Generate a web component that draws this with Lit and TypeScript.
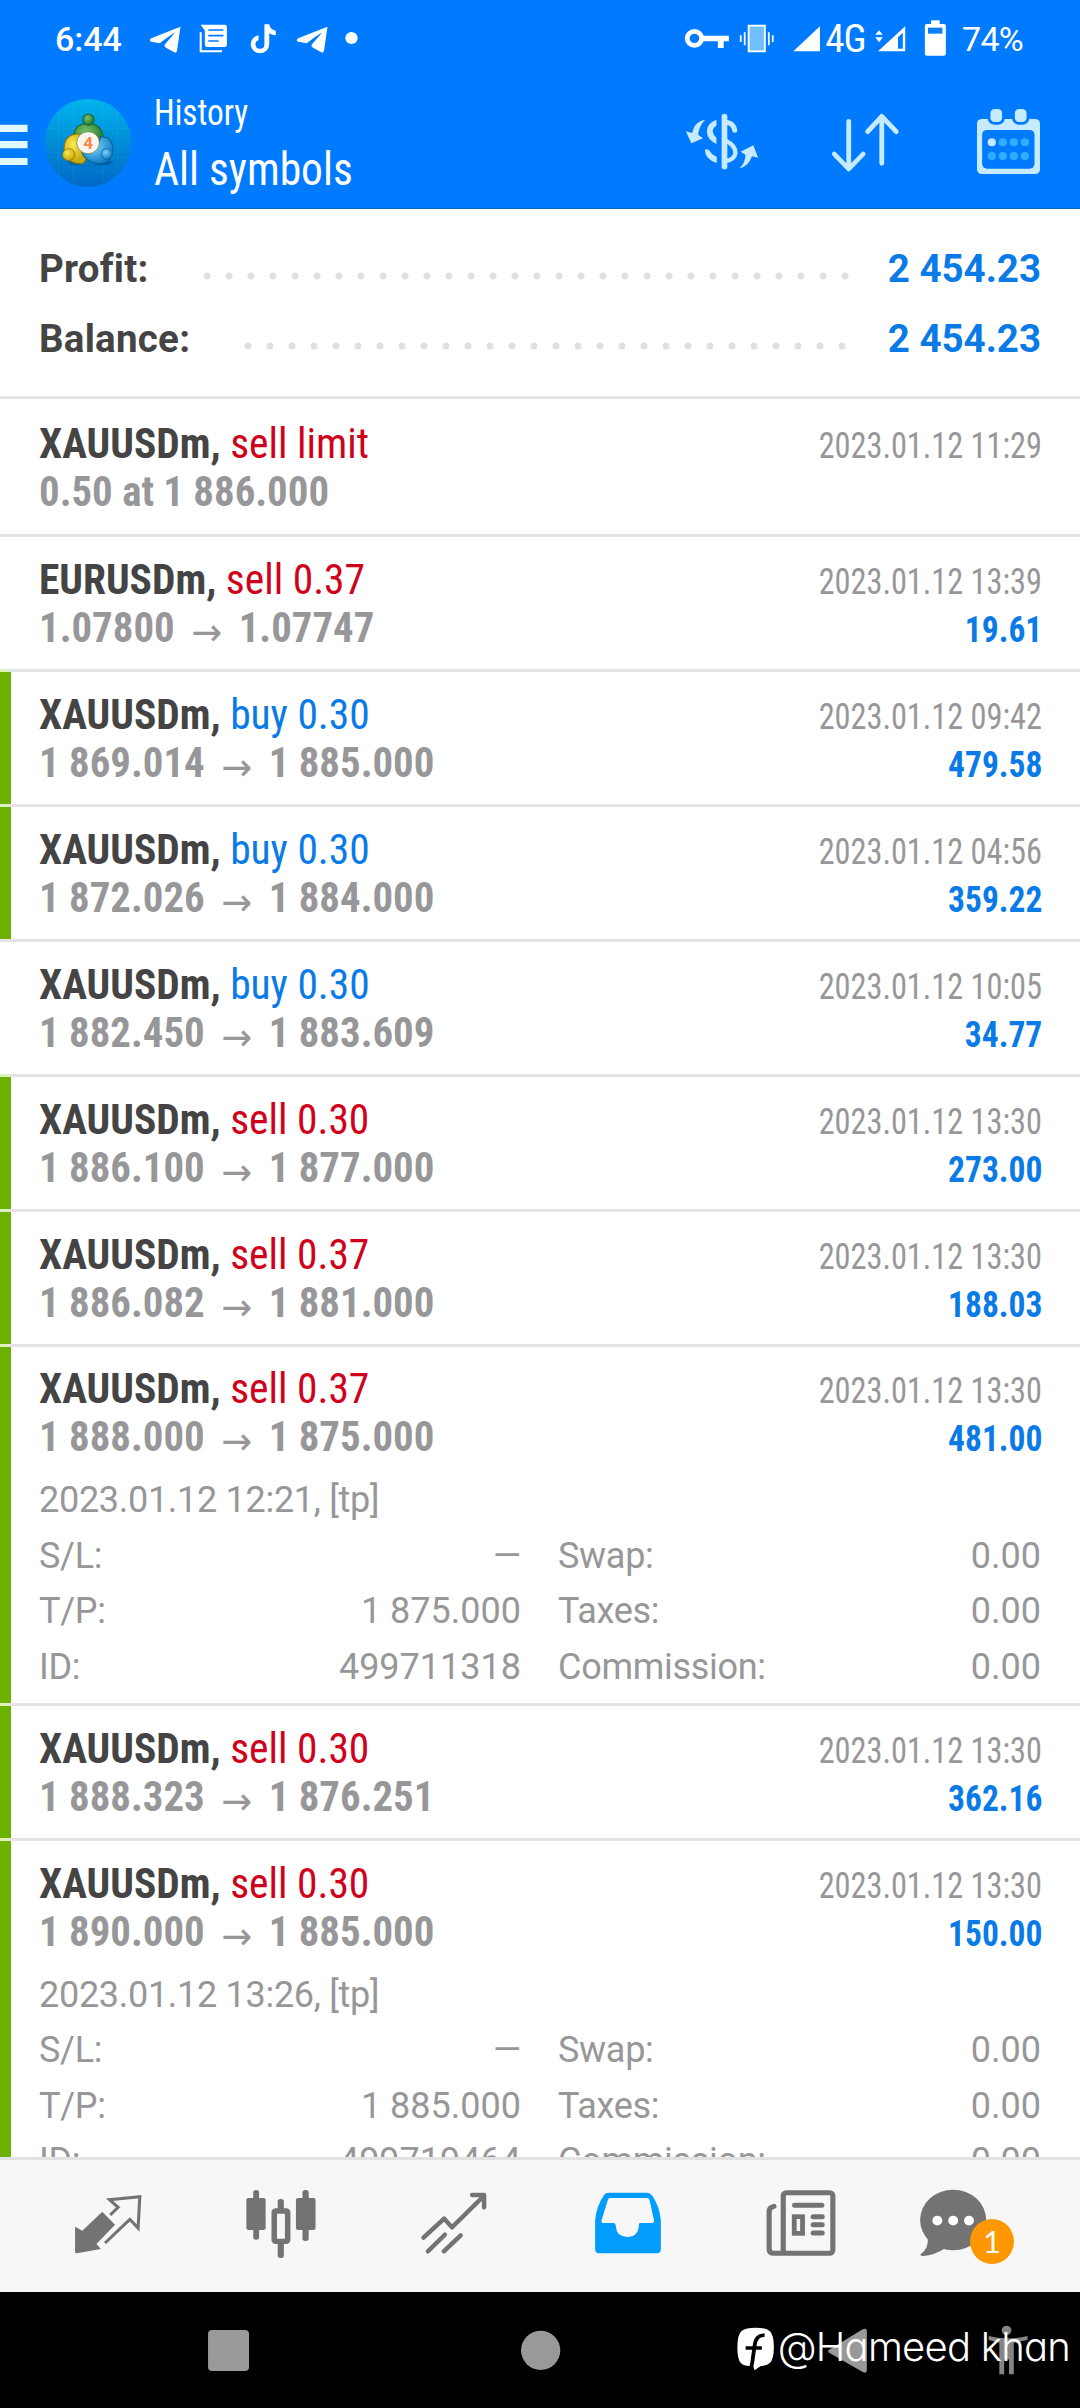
import { LitElement, html, css, svg, nothing } from "lit";
import { customElement, property } from "lit/decorators.js";
import { classMap } from "lit/directives/class-map.js";

// Icon artwork is drawn on a grid of 2.904 x 3 units per pixel.
const UX = 2.9037;
const UY = 3;

const cell = (x: number, y: number, w: number, h: number, body: unknown) => html`<svg
  viewBox="${x} ${y} ${w} ${h}"
  width="${w / UX}"
  height="${h / UY}"
  preserveAspectRatio="none"
  aria-hidden="true"
>${body}</svg>`;

interface Detail {
  opened: string;
  sl: string;
  tp: string;
  id: string;
}

interface Deal {
  symbol: string;
  side: "buy" | "sell";
  label: string;
  price: string;
  close?: string;
  time: string;
  profit?: string;
  target?: boolean;
  detail?: Detail;
}

const DEALS: Deal[] = [
  { symbol: "XAUUSDm", side: "sell", label: "sell limit", price: "0.50 at 1 886.000", time: "2023.01.12 11:29" },
  { symbol: "EURUSDm", side: "sell", label: "sell 0.37", price: "1.07800", close: "1.07747", time: "2023.01.12 13:39", profit: "19.61" },
  { symbol: "XAUUSDm", side: "buy", label: "buy 0.30", price: "1 869.014", close: "1 885.000", time: "2023.01.12 09:42", profit: "479.58", target: true },
  { symbol: "XAUUSDm", side: "buy", label: "buy 0.30", price: "1 872.026", close: "1 884.000", time: "2023.01.12 04:56", profit: "359.22", target: true },
  { symbol: "XAUUSDm", side: "buy", label: "buy 0.30", price: "1 882.450", close: "1 883.609", time: "2023.01.12 10:05", profit: "34.77" },
  { symbol: "XAUUSDm", side: "sell", label: "sell 0.30", price: "1 886.100", close: "1 877.000", time: "2023.01.12 13:30", profit: "273.00", target: true },
  { symbol: "XAUUSDm", side: "sell", label: "sell 0.37", price: "1 886.082", close: "1 881.000", time: "2023.01.12 13:30", profit: "188.03", target: true },
  {
    symbol: "XAUUSDm", side: "sell", label: "sell 0.37", price: "1 888.000", close: "1 875.000", time: "2023.01.12 13:30", profit: "481.00", target: true,
    detail: { opened: "2023.01.12 12:21, [tp]", sl: "—", tp: "1 875.000", id: "499711318" },
  },
  { symbol: "XAUUSDm", side: "sell", label: "sell 0.30", price: "1 888.323", close: "1 876.251", time: "2023.01.12 13:30", profit: "362.16", target: true },
  {
    symbol: "XAUUSDm", side: "sell", label: "sell 0.30", price: "1 890.000", close: "1 885.000", time: "2023.01.12 13:30", profit: "150.00", target: true,
    detail: { opened: "2023.01.12 13:26, [tp]", sl: "—", tp: "1 885.000", id: "499719464" },
  },
];

const telegram = svg`<path fill="#fff" d="M523 80 L438 115 Q430 122 438 125 L463 130 Q490 108 508 97 L478 133 Q474 139 481 143 L505 157 Q511 161 513 152 Z"/>`;

@customElement("status-bar")
export class StatusBar extends LitElement {
  static styles = css`
    :host { display: flex; height: 76px; padding-left: 55px; color: #fff; font: 34px/79px Roboto, sans-serif; white-space: nowrap; }
    svg { display: block; flex: none; }
    .time { width: 89.6px; flex: none; font-weight: 500; }
    .net { width: 42px; flex: none; font: 400 39px/78px "Roboto Condensed", Roboto, sans-serif; font-stretch: 75%; letter-spacing: -1px; }
    .fill { flex: 1; }
    .level { width: 118px; flex: none; letter-spacing: -0.700px; }
  `;
  render() {
    return html`
      <span class="time">6:44</span>
      ${cell(420, 0, 130, 228, telegram)}
      ${cell(550, 0, 150, 228, svg`
        <path d="M584 97 V154 H646" fill="none" stroke="#fff" stroke-width="6"/>
        <path fill="#fff" d="M584 74 H654 Q660 74 660 80 V134 Q660 141 654 141 H602 Q596 141 596 134 V92 Z"/>
        <path d="M606 90 H650 M606 107 H650 M606 123 H636" stroke="#007bff" stroke-width="5"/>`)}
      ${cell(700, 0, 147, 228, svg`<path fill="#fff" d="M768 73 h14 q3 17 19 19 v14 q-11 0 -19 -6 v33 a27 27 0 1 1 -31 -27 v15 a13 13 0 1 0 17 13 Z"/>`)}
      ${cell(420, 0, 130, 228, telegram)}
      ${cell(977, 0, 90, 228, svg`<circle cx="1022" cy="114" r="18" fill="#fff"/>`)}
      <span class="fill"></span>
      ${cell(410, 0, 290, 228, svg`
        <circle cx="449" cy="115" r="21" fill="none" stroke="#fff" stroke-width="14"/>
        <path fill="#fff" d="M472 107 H549 V124 H534 V144 H517 V124 H472Z"/>
        <rect x="606.5" y="77" width="47" height="77" fill="#70bfff" stroke="#fff" stroke-width="5.5"/>
        <path d="M583.500 106 V126 M595 97 V136 M665 97 V136 M676.500 106 V126" stroke="#fff" stroke-width="5"/>`)}
      ${cell(700, 0, 128, 228, svg`<path fill="#fff" d="M736 154 L813 79 V154Z"/>`)}
      <span class="net">4G</span>
      ${cell(950, 0, 275, 228, svg`
        <path fill="#fff" d="M974 104 L985 91 L996 104Z M974 112 H996 L985 127Z M982 154 L1061 79 V154Z"/>
        <path fill="#007bff" d="M1040 112 L1054 98 V146 H1040Z"/>
        <rect x="1118" y="72" width="61" height="95" rx="6" fill="#fff"/>
        <rect x="1136" y="61" width="25" height="16" fill="#fff"/>
        <rect x="1127" y="83" width="42" height="18" fill="#0a80f0"/>`)}
      <span class="level">74%</span>
    `;
  }
}

@customElement("app-bar")
export class AppBar extends LitElement {
  static styles = css`
    :host { display: flex; height: 132px; color: #fff; font-family: "Roboto Condensed", Roboto, sans-serif; font-stretch: 75%; white-space: nowrap; }
    svg { display: block; flex: none; }
    .titles { flex: 1; padding: 15.700px 0 0 20px; }
    .section, .scope { transform: scaleX(0.925); transform-origin: 0 50%; }
    .section { font-size: 36px; line-height: 42px; }
    .scope { font-size: 47px; line-height: 56px; margin-top: 7px; }
    .four { font: 700 50px Roboto, sans-serif; }
  `;
  render() {
    const ice = "#c6eaff";
    return html`
      ${cell(0, 228, 128, 396, svg`<path fill="#e2f8ff" d="M0 374 H80 V396 H0Z M0 423 H80 V445 H0Z M0 474 H80 V495 H0Z"/>`)}
      ${cell(128, 228, 260, 396, svg`
        <defs>
          <linearGradient id="sky" x1="0" y1="0" x2="0" y2="1"><stop offset="0" stop-color="#00b4ee"/><stop offset=".45" stop-color="#0090d8"/><stop offset="1" stop-color="#0068c8"/></linearGradient>
          <radialGradient id="g" cx=".4" cy=".35" r=".6"><stop offset="0" stop-color="#7cc46a"/><stop offset="1" stop-color="#237d2e"/></radialGradient>
          <radialGradient id="y" cx=".4" cy=".35" r=".6"><stop offset="0" stop-color="#fbe84e"/><stop offset="1" stop-color="#c9a90c"/></radialGradient>
          <radialGradient id="b" cx=".4" cy=".35" r=".6"><stop offset="0" stop-color="#7fd2fa"/><stop offset="1" stop-color="#1684c8"/></radialGradient>
        </defs>
        <ellipse cx="256" cy="429" rx="126" ry="132" fill="url(#sky)"/>
        <path d="M170 335 V523 M213 310 V550 M299 310 V550 M342 335 V523 M140 385 H372 M140 473 H372 M165 517 H347 M165 341 H347" stroke="#fff" stroke-opacity=".08" stroke-width="2"/>
        <path d="M190 480 Q256 512 330 480 L318 494 Q256 500 206 494Z" fill="#034a7e" opacity=".55"/>
        <path d="M214 420 Q210 372 257 370 Q303 374 302 432 Q290 452 276 440 L257 398 L230 412Z" fill="url(#g)" stroke="#1c6430" stroke-width="3"/>
        <path d="M240 403 Q186 396 186 448 Q194 494 240 491 L252 478 L236 440Z" fill="url(#y)" stroke="#86740c" stroke-width="3"/>
        <path d="M292 410 Q326 408 328 448 Q322 494 284 491 Q250 488 238 458 L270 448 Q290 440 292 410Z" fill="url(#b)" stroke="#0b5b93" stroke-width="3"/>
        <ellipse cx="257" cy="359" rx="16" ry="17" fill="url(#g)" stroke="#1c6430" stroke-width="3"/>
        <circle cx="200" cy="464" r="18" fill="url(#y)" stroke="#86740c" stroke-width="2"/>
        <circle cx="310" cy="462" r="16" fill="url(#b)" stroke="#0b5b93" stroke-width="2"/>
        <circle cx="256" cy="428" r="33" fill="#fdf6f0" stroke="#55773c" stroke-width="2"/>
        <text class="four" x="256" y="446" text-anchor="middle" fill="#f58a44">4</text>`)}
      <div class="titles">
        <div class="section">History</div>
        <div class="scope">All symbols</div>
      </div>
      ${cell(410, 228, 330, 396, svg`
        <rect x="528" y="341" width="16.500" height="167" rx="8" fill="${ice}"/>
        <path d="M544 367 Q564 371 566 391" fill="none" stroke="${ice}" stroke-width="15" stroke-linecap="round"/>
        <path d="M540 422 Q570 438 568 460 Q564 480 540 483" fill="none" stroke="${ice}" stroke-width="13"/>
        <path fill="${ice}" d="M513 359 Q485 370 485 395 Q487 420 513 432 V413 Q503 405 502 394 Q503 382 513 377Z M479 450 Q487 444 494 453 Q501 466 514 470 V489 Q482 480 479 450Z"/>
        <path fill="${ice}" d="M480 359 Q456 364 448 382 L442 399 L424 394 L440 430 L474 415 L460 404 Q461 380 480 359Z"/>
        <path fill="${ice}" d="M620 436 L583 455 L597 464 Q598 486 580 505 Q606 500 616 469 L634 473 Z"/>`)}
      ${cell(740, 228, 410, 396, svg`<path d="M896 364 V506 M854 462 L896 507 L938 462 M992 350 V490 M951 395 L992 349 L1034 395" fill="none" stroke="${ice}" stroke-width="14" stroke-linecap="round" stroke-linejoin="round"/>`)}
      ${cell(1150, 228, 418, 396, svg`
        <rect x="1269" y="357" width="183" height="165" rx="14" fill="${ice}"/>
        <rect x="1284" y="390" width="152" height="116" rx="14" fill="#007bff"/>
        <rect x="1304" y="323" width="42" height="47" rx="16" fill="${ice}" stroke="#007bff" stroke-width="8"/>
        <rect x="1375" y="323" width="42" height="47" rx="16" fill="${ice}" stroke="#007bff" stroke-width="8"/>
        <g fill="#30adff">
          <circle cx="1344" cy="427" r="12"/><circle cx="1376" cy="427" r="12"/><circle cx="1408" cy="427" r="12"/>
          <circle cx="1312" cy="468" r="12"/><circle cx="1344" cy="468" r="12"/><circle cx="1376" cy="468" r="12"/><circle cx="1408" cy="468" r="12"/>
        </g>
        <circle cx="1312" cy="427" r="12" fill="${ice}"/>`)}
    `;
  }
}

@customElement("deal-row")
export class DealRow extends LitElement {
  @property({ attribute: false }) deal!: Deal;
  static styles = css`
    :host { display: block; flex: none; white-space: nowrap; }
    :host(.first) .body { padding-top: 20.600px; padding-bottom: 18.400px; }
    .row { display: flex; border-top: 3px solid #e4e4e4; }
    .row.hit { border-image: linear-gradient(90deg, #def3bb 11px, #e4e4e4 11px) 3; }
    .mark { width: 11px; flex: none; }
    .hit .mark { background: #6cb000; }
    .body { flex: 1; padding: 18.600px 38px 17.400px 28px; }
    .open .body { padding-bottom: 8px; }
    .line { display: flex; justify-content: space-between; height: 48px; line-height: 48px; font-family: "Roboto Condensed", Roboto, sans-serif; font-stretch: 75%; font-size: 42px; }
    .title, .price { transform: scaleX(0.987); transform-origin: 0 50%; }
    .symbol { font-weight: 700; color: #444; }
    .sell { color: #d0021b; }
    .buy { color: #0a7be6; }
    .price { font-weight: 700; color: #979799; transform: scaleX(0.972); }
    .arrow { font: 400 38px/0 "DejaVu Sans", sans-serif; margin: 0 17px; position: relative; top: 3px; }
    .time, .profit { font-size: 36px; line-height: 52px; transform-origin: 100% 50%; }
    .time { color: #979799; transform: scaleX(0.897); }
    .profit { color: #0a7be6; font-weight: 700; transform: scaleX(0.93); }
    .detail { margin-top: 11.800px; margin-right: 1px; font: 36px/55.500px Roboto, sans-serif; color: #979799; }
    .text { letter-spacing: -0.290px; }
    .grid { display: grid; grid-template-columns: 482px 483px; column-gap: 37px; }
    .pair { display: flex; justify-content: space-between; }
  `;
  private pair(name: string, value: string) {
    return html`<div class="pair"><span class="text">${name}</span><span>${value}</span></div>`;
  }
  render() {
    const d = this.deal;
    return html`<div class=${classMap({ row: true, hit: !!d.target, open: !!d.detail })}>
      <div class="mark"></div>
      <div class="body">
        <div class="line">
          <span class="title"><span class="symbol">${d.symbol},</span> <span class=${d.side}>${d.label}</span></span>
          <span class="time">${d.time}</span>
        </div>
        <div class="line">
          <span class="price">${d.price}${d.close ? html`<span class="arrow">→</span>${d.close}` : nothing}</span>
          ${d.profit ? html`<span class="profit">${d.profit}</span>` : nothing}
        </div>
        ${d.detail
          ? html`<div class="detail">
              <div class="text">${d.detail.opened}</div>
              <div class="grid">
                ${this.pair("S/L:", d.detail.sl)}${this.pair("Swap:", "0.00")}
                ${this.pair("T/P:", d.detail.tp)}${this.pair("Taxes:", "0.00")}
                ${this.pair("ID:", d.detail.id)}${this.pair("Commission:", "0.00")}
              </div>
            </div>`
          : nothing}
      </div>
    </div>`;
  }
}

@customElement("tab-bar")
export class TabBar extends LitElement {
  static styles = css`
    :host { display: flex; flex: none; height: 132px; padding-left: 21.350px; border-top: 3px solid #e2e2e2; background: #f7f7f7; }
    svg { display: block; flex: none; }
    .chat { position: relative; }
    .badge { position: absolute; left: 84.300px; top: 59px; width: 44px; height: 45px; border-radius: 50%; background: #ff9800; color: #fff; font: 31px/45px Lato, sans-serif; text-align: center; }
  `;
  render() {
    const k = "#737373";
    return html`
      ${cell(62, 60, 502, 396, svg`
        <path fill="${k}" d="M298 215 L335 254 L281 312 L294 327 L224 340 Q219 340 219 335 V260 L240 272Z"/>
        <path fill="none" stroke="${k}" stroke-width="9" d="M321 225 L344 202 L319 179 L407 170 L402 264 L378 238 L306 309"/>`)}
      ${cell(564, 60, 502, 396, svg`
        <g fill="${k}">
          <rect x="716" y="174" width="56" height="96" rx="6"/><rect x="736" y="150" width="17" height="149" rx="8"/>
          <rect x="860" y="174" width="57" height="96" rx="6"/><rect x="879" y="150" width="18" height="153" rx="8"/>
          <rect x="807" y="177" width="18" height="40" rx="8"/><rect x="807" y="303" width="18" height="51" rx="8"/>
        </g>
        <rect x="797" y="213" width="39" height="91" rx="4" fill="#f7f7f7" stroke="${k}" stroke-width="16"/>`)}
      ${cell(1066, 60, 502, 396, svg`<path d="M1230 293 L1290 236 L1313 262 L1405 168 M1371 165 H1406 V202 M1243 334 L1292 284 M1289 334 L1338 286" fill="none" stroke="${k}" stroke-width="13" stroke-linecap="round" stroke-linejoin="round"/>`)}
      ${cell(0, 60, 502, 396, svg`<path fill="#009dff" fill-rule="evenodd" d="M200 158 H311 Q320 158 326 167 Q348 200 351 242 V328 Q351 340 340 340 H171 Q160 340 160 328 V242 Q163 200 186 165 Q190 158 200 158Z M204 174 H311 Q316 174 318 180 L331 240 Q332 248 325 249 H290 Q286 251 287 258 Q284 291 253 291 Q222 290 220 258 Q220 250 215 249 H184 Q176 248 179 240 L197 180 Q199 174 204 174Z"/>`)}
      ${cell(502, 60, 502, 396, svg`
        <g fill="none" stroke="${k}" stroke-width="15" stroke-linecap="round">
          <rect x="706" y="158" width="144" height="182" rx="9"/>
          <path d="M679 199 Q665 202 665 214 V326 Q665 340 679 340 H706"/>
          <path d="M739 196 H818 M793 230 H819 M793 254 H819 M793 279 H819"/>
          <rect x="738" y="230" width="24" height="50" stroke-width="14"/>
        </g>`)}
      <div class="chat">
        ${cell(1004, 60, 502, 396, svg`
          <ellipse cx="1199" cy="240" rx="96" ry="91" fill="${k}"/>
          <path fill="${k}" d="M1125 290 Q1130 325 1103 344 Q1106 348 1112 348 Q1145 346 1176 325Z"/>
          <g fill="#fff"><circle cx="1153" cy="242" r="14.500"/><circle cx="1199" cy="242" r="14.500"/><circle cx="1245" cy="242" r="14.500"/></g>`)}
        <span class="badge">1</span>
      </div>
    `;
  }
}

@customElement("system-nav")
export class SystemNav extends LitElement {
  static styles = css`
    :host { display: flex; flex: none; position: relative; height: 116px; padding-left: 155px; background: #000; }
    svg { display: block; flex: none; }
    .handle { position: absolute; left: 736px; top: 33px; display: flex; align-items: center; gap: 1px; color: #fff; white-space: nowrap; }
    .name { font: 300 40px/48px Inter, sans-serif; font-feature-settings: "cv11"; letter-spacing: -0.750px; position: relative; top: -2px; }
  `;
  render() {
    return html`
      ${cell(450, 456, 426, 348, svg`<rect x="604" y="570" width="119" height="123" rx="12" fill="#999"/>`)}
      ${cell(876, 456, 1384, 348, svg`<ellipse cx="1569" cy="631" rx="57" ry="59" fill="#999"/>`)}
      ${cell(692, 456, 460, 348, svg`<path fill="#999" d="M838 631 L938 568 Q950 563 950 573 V690 Q950 702 938 696 L838 637Z"/>`)}
      ${cell(1152, 456, 416, 348, svg`
        <circle cx="1354" cy="571" r="14" fill="#858585"/>
        <path fill="#858585" d="M1302 588 Q1354 602 1415 588 V600 L1375 608 V703 H1361 V658 H1347 V703 H1333 V608 L1302 600Z"/>`)}
      <div class="handle">
        ${cell(570, 560, 118, 144, svg`
          <path fill="#fff" d="M627 568 Q655 568 667 577 Q680 588 680 626 Q680 664 668 674 Q660 682 642 683 L624 696 L620 684 Q592 684 584 674 Q574 664 574 626 Q574 588 587 577 Q598 568 627 568Z"/>
          <path d="M653 591 Q628 588 624 622 L620 652 Q618 672 614 688 M598 629 H645" fill="none" stroke="#000" stroke-width="11"/>`)}
        <span class="name">@Hameed khan</span>
      </div>
    `;
  }
}

@customElement("app-root")
export class AppRoot extends LitElement {
  static styles = css`
    :host { display: flex; flex-direction: column; width: 1080px; height: 2408px; overflow: hidden; background: #fff; }
    .top { flex: none; background: #007bff; border-bottom: 1px solid #0d6fae; }
    .summary { flex: none; height: 187px; box-sizing: border-box; padding: 25px 39px 0; font: 700 38.500px/70px Roboto, sans-serif; }
    .total { display: flex; white-space: nowrap; }
    .name { color: #444; letter-spacing: 0.250px; }
    .dots { flex: 1; margin: 0 32px 0 47px; background: radial-gradient(circle at 11px 42px, #e0e0e0 3px, transparent 4px) 0 0 / 22px 70px repeat-x; }
    .sum { color: #0a7be6; }
    .list { flex: 1; min-height: 0; overflow: hidden; display: flex; flex-direction: column; }
  `;
  render() {
    const total = (name: string) => html`<div class="total"><span class="name">${name}</span><span class="dots"></span><span class="sum">2 454.23</span></div>`;
    return html`
      <div class="top"><status-bar></status-bar><app-bar></app-bar></div>
      <div class="summary">${total("Profit:")}${total("Balance:")}</div>
      <div class="list">
        ${DEALS.map((deal, i) => html`<deal-row class=${i === 0 ? "first" : ""} .deal=${deal}></deal-row>`)}
      </div>
      <tab-bar></tab-bar>
      <system-nav></system-nav>
    `;
  }
}
